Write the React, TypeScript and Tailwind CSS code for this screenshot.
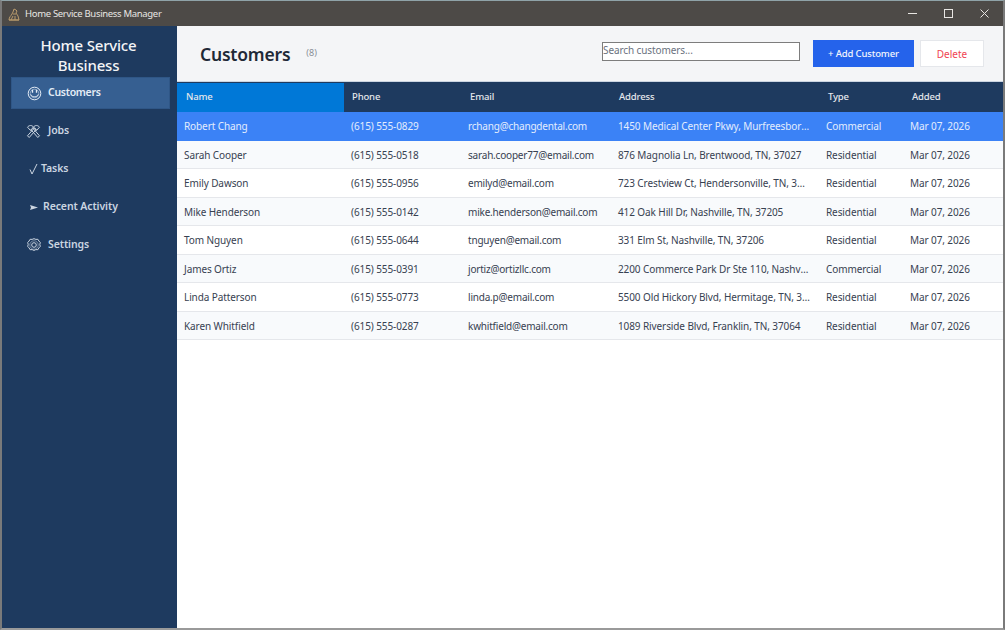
import React from "react";

const rows = [
  ["Robert Chang", "(615) 555-0829", "rchang@changdental.com", "1450 Medical Center Pkwy, Murfreesboro, TN, 37129", "Commercial"],
  ["Sarah Cooper", "(615) 555-0518", "sarah.cooper77@email.com", "876 Magnolia Ln, Brentwood, TN, 37027", "Residential"],
  ["Emily Dawson", "(615) 555-0956", "emilyd@email.com", "723 Crestview Ct, Hendersonville, TN, 37075", "Residential"],
  ["Mike Henderson", "(615) 555-0142", "mike.henderson@email.com", "412 Oak Hill Dr, Nashville, TN, 37205", "Residential"],
  ["Tom Nguyen", "(615) 555-0644", "tnguyen@email.com", "331 Elm St, Nashville, TN, 37206", "Residential"],
  ["James Ortiz", "(615) 555-0391", "jortiz@ortizllc.com", "2200 Commerce Park Dr Ste 110, Nashville, TN, 37210", "Commercial"],
  ["Linda Patterson", "(615) 555-0773", "linda.p@email.com", "5500 Old Hickory Blvd, Hermitage, TN, 37076", "Residential"],
  ["Karen Whitfield", "(615) 555-0287", "kwhitfield@email.com", "1089 Riverside Blvd, Franklin, TN, 37064", "Residential"],
];

const grid = "grid grid-cols-[167px_117px_150px_208px_84px_1fr]";

function Smile() {
  return (
    <svg width="15" height="15" viewBox="0 0 15 15" fill="none" stroke="currentColor" strokeWidth="1">
      <circle cx="7.5" cy="7.5" r="6.300" />
      <circle cx="7.500" cy="7.500" r="4.300" strokeWidth="0.500" />
      <path d="M3.800 8.500c.8 3 6.600 3 7.400 0" />
      <path d="M5.500 3.800v3M9.500 3.800v3" strokeWidth="1.300" />
    </svg>
  );
}
function Tools() {
  return (
    <svg width="15" height="15" viewBox="0 0 15 15" fill="none" stroke="currentColor" strokeWidth="1">
      <path d="M3.200 13.500l7-8M1.500 11.800l7-8 1.700 1.700M11.800 13.500l-7-8M13.500 11.800l-7-8" />
      <path d="M1.500 3.200C3 1 6 1 7.500 3L4.500 6.500zM7.500 3c1.500-2 4.500-2 6 .2L10.500 6.500z" />
      <path d="M1.500 11.800l1.700 1.700M13.500 11.800l-1.700 1.700" />
    </svg>
  );
}
function Gear() {
  return (
    <svg width="14" height="14" viewBox="0 0 14 14" fill="none" stroke="currentColor" strokeWidth="1">
      <circle cx="7" cy="7" r="2.300" />
      <circle cx="7" cy="7" r="4.200" strokeWidth="0.500" />
      <path d="M7 .7l1.900.7 2-.1 1 1.700 1.400 1.500-.5 2 .5 1.900-1.400 1.500-1 1.800-2-.1-1.900.8-1.900-.8-2 .1-1-1.800L.7 8.400l.5-1.900-.5-2 1.400-1.500 1-1.700 2 .1z" />
    </svg>
  );
}
function Check() {
  return (
    <svg width="9" height="12" viewBox="0 0 9 12" fill="none" stroke="currentColor" strokeWidth="1">
      <path d="M1 6.500L3 11 8 1" />
    </svg>
  );
}
function Arrow() {
  return (
    <svg width="8" height="5" viewBox="0 0 8 5" fill="currentColor">
      <path d="M0 0l8 2.500L0 5l1-2.500z" />
    </svg>
  );
}

function NavItem({ icon, label, gap, active }: { icon: React.ReactNode; label: string; gap: string; active?: boolean }) {
  return (
    <div
      className={`flex h-[32px] items-center pl-[15px] text-[10.5px] font-semibold text-[#cbd5e1] ${gap} ${
        active ? "border border-[#2f5686] bg-[#365f91] tracking-[-0.3px] text-[#e5edf7]" : "tracking-[-0.1px]"
      }`}
    >
      <span className="flex w-[15px] shrink-0 items-center justify-center">{icon}</span>
      <span>{label}</span>
    </div>
  );
}

export default function App() {
  return (
    <div
      className="flex h-[630px] w-[1005px] flex-col overflow-hidden border-x-2 border-t border-b-2 border-x-[#7a7a7a] border-t-[#8fa3a8] border-b-[#9a9a9a] bg-white"
      style={{ fontFamily: '"Noto Sans", "Open Sans", sans-serif' }}
    >
      <div className="flex h-[25px] shrink-0 items-center bg-[#4d4a47] pl-[6px] text-[#e8e6e3]">
        <svg width="12" height="14" viewBox="0 0 12 14" fill="none" stroke="#b89a6c" strokeWidth="1">
          <path d="M1 13c0-3 2-4 3-6l1-2 1-3 2 1 1 1-1 2 2 3 1 4zM3 13l2-4M7 13V9M1 13h10M5 7h3" />
        </svg>
        <span className="ml-[5px] pt-[1px] text-[9.5px] tracking-[-0.32px]">Home Service Business Manager</span>
        <div className="ml-auto flex items-center gap-[27px] pr-[14px]">
          <span className="h-px w-[9px] bg-[#e8e6e3]" />
          <span className="h-[9px] w-[9px] border border-[#e8e6e3]" />
          <svg width="9" height="9" viewBox="0 0 9 9" stroke="#e8e6e3" strokeWidth="1">
            <path d="M.5.500l8 8M8.500.500l-8 8" />
          </svg>
        </div>
      </div>
      <div className="flex min-h-0 flex-1">
        <aside className="flex w-[175px] shrink-0 flex-col bg-[#1e3a5f] pl-[9px] pr-[7px]">
          <div className="mr-[4px] pt-[9px] text-center text-[15px] font-medium leading-[20px] tracking-[-0.2px] text-[#f3f4f6]">
            Home Service
            <br />
            Business
          </div>
          <div className="mt-[2px] flex flex-col gap-[6px]">
            <NavItem icon={<Smile />} label="Customers" gap="gap-[6px]" active />
            <NavItem icon={<Tools />} label="Jobs" gap="gap-[7px]" />
            <NavItem icon={<Check />} label="Tasks" gap="gap-[-1px]" />
            <NavItem icon={<Arrow />} label="Recent Activity" gap="gap-[2px]" />
            <NavItem icon={<Gear />} label="Settings" gap="gap-[7px]" />
          </div>
        </aside>
        <main className="flex min-w-0 flex-1 flex-col">
          <header className="flex h-[56px] shrink-0 items-center border-b border-[#cbd5e1] bg-[#f4f5f7] pl-[23px] pr-[19px]">
            <h1 className="pt-[2px] text-[17.5px] font-semibold tracking-[-0.2px] text-[#1f2937]">Customers</h1>
            <span className="mb-[2px] ml-[16px] text-[9px] text-[#8a8f98]">(8)</span>
            <input
              placeholder="Search customers..."
              className="mb-[4px] ml-auto h-[19px] w-[198px] border border-[#7d7d7d] bg-white pb-[3px] text-[10px] tracking-[-0.1px] placeholder:text-[#6b7280]"
            />
            <button className="ml-[13px] h-[27px] w-[101px] bg-[#2563eb] pt-[1px] text-[9.5px] font-medium tracking-[-0.15px] text-[#f3f6fd]">+ Add Customer</button>
            <button className="ml-[6px] h-[27px] w-[64px] border border-[#e5e7eb] bg-white pt-[1px] text-[10px] text-[#f04452]">Delete</button>
          </header>
          <div className={`${grid} h-[30px] shrink-0 items-center bg-[#1e3a5f] pt-[1px] text-[9.5px] font-medium tracking-[-0.15px] text-[#e5e7eb]`}>
            <div className="flex h-full items-center bg-[#0078d7] pl-[9px]">Name</div>
            <div className="pl-[8px]">Phone</div>
            <div className="pl-[9px]">Email</div>
            <div className="pl-[8px]">Address</div>
            <div className="pl-[9px]">Type</div>
            <div className="pl-[9px]">Added</div>
          </div>
          <div className="flex flex-col">
            {rows.map((r, i) => (
              <div
                key={r[0]}
                className={`${grid} h-[28.5px] items-center border-b border-[#e5e7eb] pt-[1.5px] text-[10px] tracking-[-0.1px] ${
                  i === 0 ? "border-b-[#3b82f6] bg-[#3b82f6] text-[#e3edfd]" : i % 2 ? "bg-[#f8fafc] text-[#374151]" : "bg-white text-[#374151]"
                }`}
              >
                {r.map((c, j) => (
                  <div key={j} className={`truncate pl-[7px] ${j === 3 ? "pr-[9px]" : ""} ${j === 2 ? "tracking-[-0.2px]" : ""}`}>
                    {c}
                  </div>
                ))}
                <div className="pl-[7px]">Mar 07, 2026</div>
              </div>
            ))}
          </div>
        </main>
      </div>
    </div>
  );
}
